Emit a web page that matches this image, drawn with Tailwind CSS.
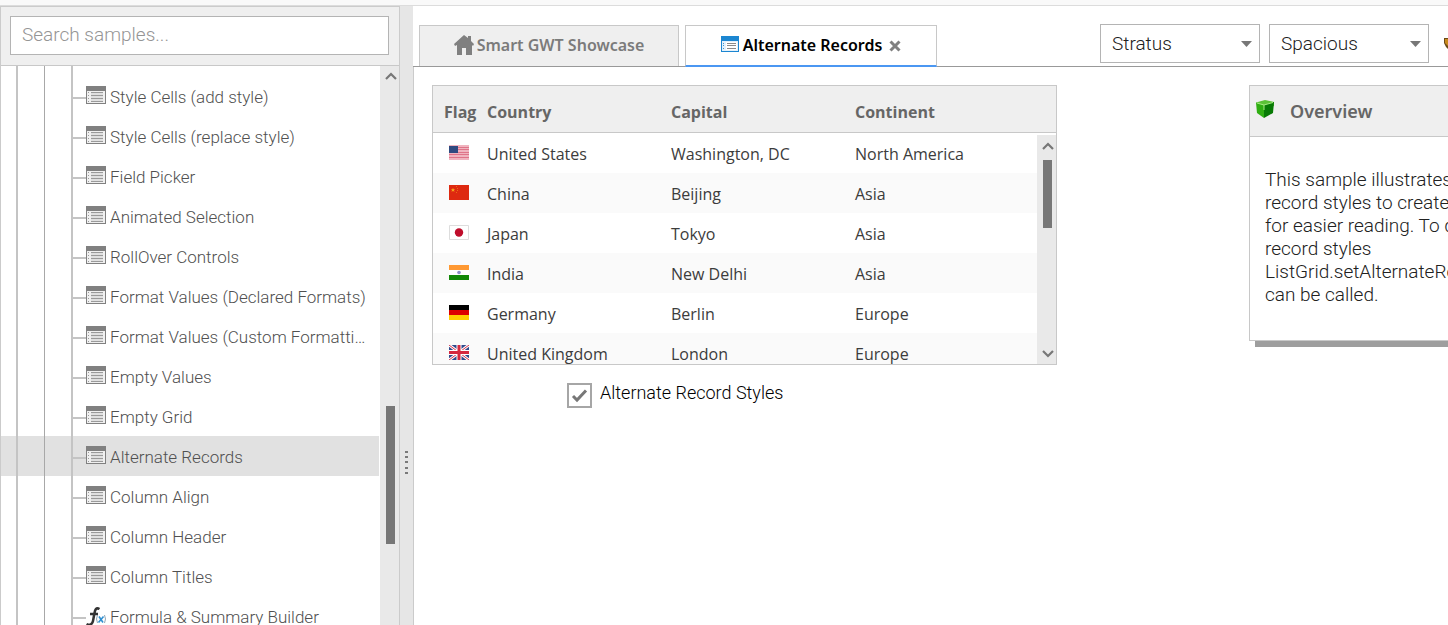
<!DOCTYPE html>
<html lang="en">
<head>
<meta charset="utf-8">
<title>Smart GWT Showcase</title>
<script src="https://cdn.jsdelivr.net/npm/@tailwindcss/browser@4"></script>
</head>
<body class="flex h-screen flex-col overflow-hidden bg-white font-['Roboto',sans-serif] text-lg font-light text-[#212121]">
<svg class="hidden">
  <symbol id="grid" viewBox="0 0 20 18">
    <path fill="#808080" d="M0 0h20v18H0z"/>
    <path fill="#f0f0f0" d="M1 5h18v12H1z"/>
    <path fill="#e0e0e0" d="M5 7h12v8H5z"/>
    <path stroke="#9a9a9a" d="M5 6.500h12M5 9.500h12M5 12.500h12M5 15.500h12M2 6.500h1M2 9.500h1M2 12.500h1M2 15.500h1"/>
  </symbol>
  <symbol id="up" viewBox="0 0 12 8"><path fill="none" stroke="#777" stroke-width="2.200" d="M1 7l5-5 5 5"/></symbol>
</svg>
<div class="h-1.5 shrink-0 border-b border-[#dcdcdc] bg-[#f9f9f9]"></div>
<div class="flex min-h-0 flex-1">
  <aside class="flex w-[400px] shrink-0 flex-col border-x border-t border-[#cbcbcb]">
    <div class="border-b border-[#c8c8c8] bg-[#efefef] pt-[9px] pr-2.5 pb-[10px] pl-[9px]">
      <input type="text" aria-label="Search samples" placeholder="Search samples..." class="block h-[39px] w-full border border-[#b4b4b4] bg-white px-[11px] pb-0.5 text-[19px] font-light placeholder:text-[#959595] outline-none">
    </div>
    <div class="flex min-h-0 flex-1">
      <div class="min-w-0 flex-1 overflow-hidden">
        <ul id="tree" class="-mt-[30px] text-[17px] text-[#505050]"></ul>
      </div>
      <div class="flex w-[19px] shrink-0 flex-col items-center bg-[#e9e9e9] pt-1.5 pl-0.5">
        <svg class="h-2 w-3"><use href="#up"/></svg>
        <div class="mt-[326px] h-[138px] w-[9px] bg-[#777]"></div>
      </div>
    </div>
  </aside>
  <div class="flex w-[13px] shrink-0 items-center justify-center bg-[#e6e6e6] pt-[294px] pr-px">
    <svg class="h-[26px] w-[3px]" viewBox="0 0 3 26" fill="#7a7a7a"><path d="M0 1h3v2H0zM0 6h3v2H0zM0 11h3v2H0zM0 17h3v2H0zM0 22h3v2H0z"/></svg>
  </div>
  <main class="flex min-w-0 flex-1 flex-col overflow-hidden">
    <div class="flex h-[61px] shrink-0 items-end border-b border-[#999] pl-1.5">
      <button class="flex h-[41px] w-[260px] shrink-0 items-center justify-center gap-[3px] border border-b-0 border-[#c8c8c8] bg-[#efefef] pb-0.5 font-['Noto_Sans',sans-serif] text-base font-semibold text-[#7b7b7b]">
        <svg class="h-5 w-5" viewBox="0 0 20 20" fill="#808080"><path d="M10 0L0 9l1 2 2-1v10h5v-7h4v7h6V10l1 1 1-2-3-3V1h-3v2z"/></svg>
        Smart GWT Showcase
      </button>
      <div class="-mb-px ml-1.5 flex h-[42px] w-[252px] shrink-0 items-center justify-center border border-b-2 border-[#c8c8c8] border-b-[#4b97f2] bg-white pb-0.5 font-['Noto_Sans',sans-serif] text-base font-semibold text-black">
        <svg class="mr-1 mb-0.5 h-4 w-[18px]" viewBox="0 0 18 16"><path fill="#1c86d1" d="M0 0h18v16H0z"/><path fill="#e4f1fb" d="M1 5h16v10H1z"/><path fill="#fff" d="M5 6h11v8H5z"/><path stroke="#8a8a8a" d="M6 7.500h9M6 9.500h9M6 12.500h9"/><path stroke="#3c92d4" d="M2 7.500h1M2 9.500h1M2 12.500h1"/></svg>
        <button>Alternate Records</button>
        <button aria-label="Close tab" class="ml-[7px] pt-0.5"><svg class="h-3 w-3" viewBox="0 0 12 12"><path stroke="#808080" stroke-width="3" d="M1.500 1.500l9 9M10.500 1.500l-9 9"/></svg></button>
      </div>
      <div class="mb-[3px] ml-auto flex shrink-0 items-center">
        <label class="relative mr-[9px]"><select aria-label="Skin" class="block h-[39px] w-[160px] appearance-none border border-[#b4b4b4] bg-white pl-[11px] text-[19px] font-light"><option>Stratus</option></select><svg class="pointer-events-none absolute top-[17px] right-2 h-1.5 w-[11px]" viewBox="0 0 11 6"><path fill="#777" d="M0 0h11L5.500 6z"/></svg></label>
        <label class="relative"><select aria-label="Density" class="block h-[39px] w-[160px] appearance-none border border-[#b4b4b4] bg-white pl-[11px] text-[19px] font-light"><option>Spacious</option></select><svg class="pointer-events-none absolute top-[17px] right-2 h-1.5 w-[11px]" viewBox="0 0 11 6"><path fill="#777" d="M0 0h11L5.500 6z"/></svg></label>
        <svg class="ml-[15px] h-3 w-1" viewBox="0 0 4 12"><path fill="#6b4a17" d="M0 0h4v11l-2-2L0 5z"/><path fill="#c98a1c" d="M1 1h3v7L1 5z"/></svg>
      </div>
    </div>
    <div class="flex min-h-0 flex-1 items-start border-l border-[#cbcbcb] pt-[18px] pl-[18px]">
      <section class="w-[625px] shrink-0">
        <div class="flex h-[280px] flex-col border border-[#c8c8c8] font-['Open_Sans',sans-serif] text-base font-normal text-[#3c3c3c]">
          <div class="relative min-h-0 flex-1 overflow-hidden">
            <table class="w-full table-fixed border-separate border-spacing-0">
              <colgroup><col class="w-[52px]"><col class="w-[184px]"><col class="w-[184px]"><col><col class="w-5"></colgroup>
              <thead class="text-left text-[#666]"><tr class="h-[47px] bg-[#efefef] *:border-b *:border-[#c8c8c8] *:pt-1.5 *:font-bold"><th class="pl-[11px]">Flag</th><th class="pl-0.5">Country</th><th class="pl-0.5">Capital</th><th class="pl-0.5">Continent</th><th></th></tr></thead>
              <tbody id="rows" class="[&_td]:pl-0.5 [&_td]:pt-0.5"></tbody>
            </table>
            <div class="absolute top-[49px] right-0 bottom-0 flex w-[19px] flex-col items-center bg-[#e9e9e9] pt-[7px] pb-1.5 pl-0.5">
              <svg class="h-2 w-3"><use href="#up"/></svg>
              <div class="mt-2.5 h-[68px] w-[9px] bg-[#777]"></div>
              <svg class="mt-auto h-2 w-3 rotate-180"><use href="#up"/></svg>
            </div>
          </div>
        </div>
        <label class="mt-3.5 ml-[135px] flex w-max items-center gap-2 text-black">
          <span class="relative block h-[25px] w-[25px]"><input type="checkbox" checked class="peer block h-[25px] w-[25px] appearance-none border-2 border-[#a6a6a6] bg-white"><svg class="pointer-events-none absolute top-1 left-1 hidden h-[17px] w-[17px] peer-checked:block" viewBox="0 0 17 17"><path fill="none" stroke="#777" stroke-width="3" d="M2 9l4 4L15 3.500"/></svg></span>
          <span class="pb-1">Alternate Record Styles</span>
        </label>
      </section>
      <section class="ml-[192px] w-[340px] shrink-0 border border-[#c8c8c8] shadow-[6px_6px_0_#9e9e9e]">
        <h2 class="flex h-[51px] items-center border-b border-[#c8c8c8] bg-[#efefef] pl-1.5 font-['Noto_Sans',sans-serif] text-lg font-semibold text-[#666]">
          <svg class="mr-4 mb-1 h-[18px] w-[18px]" viewBox="0 0 18 18"><path fill="#5bc236" d="M0 2.500L9 0l9 2v4L8 8z"/><path fill="#2fae12" d="M0 2.500L8 5v13L1 13z"/><path fill="#087a05" d="M8 5l10-3-1 11-9 5z"/><path fill="none" stroke="#a6ec83" d="M1 3l7 2 9-2.500M8 5v5"/></svg>
          Overview</h2>
        <p class="pt-[31px] pb-[34px] pl-[15px] text-[19px] leading-[23px] whitespace-nowrap">This sample illustrates the use of alternating<br>record styles to create a ledger effect<br>for easier reading. To disable alternating<br>record styles<br>ListGrid.setAlternateRecordStyles()<br>can be called.</p>
      </section>
    </div>
  </main>
</div>
<script>
const gridIcon = '<svg class="mb-0.5 h-[18px] w-5"><use href="#grid"/></svg>';
const fxIcon = '<svg class="h-[18px] w-5" viewBox="0 0 20 18"><path fill="none" stroke="#333" stroke-width="2.500" d="M13.500 2C10 0 9 3 8.500 6L7 14c-.6 3-3 5-6.500 3M4 7h8"/><path fill="none" stroke="#2f8fd0" stroke-width="1.600" d="M13 9.500l4 6M17.500 9.500l-5 6"/><path fill="none" stroke="#8fa5b5" d="M11.500 8q-2 4 0 8M18.500 8q2 4 0 8"/></svg>';
const names = ['Cell Styles','Style Cells (add style)','Style Cells (replace style)','Field Picker','Animated Selection','RollOver Controls','Format Values (Declared Formats)','Format Values (Custom Formatting)','Empty Values','Empty Grid','Alternate Records','Column Align','Column Header','Column Titles','Formula & Summary Builder'];
document.getElementById('tree').innerHTML = names.map(n => `<li class="flex h-10 items-center pl-[15px] ${n === 'Alternate Records' ? 'bg-[#e1e1e1] mr-px' : ''}">
<span class="flex h-full w-[70px] shrink-0 items-center"><span class="h-full w-7 border-l-2 border-[#c4c4c4]"></span><span class="h-full w-[27px] border-l border-[#a8a8a8]"></span><span class="flex h-full flex-1 items-center border-l-2 border-[#c4c4c4] pt-1"><span class="h-0.5 w-full bg-[#c4c4c4]"></span></span></span>
${n.startsWith('Formula') ? fxIcon : gridIcon}<a href="#" class="ml-1 min-w-0 flex-1 truncate pt-0.5 pr-1.5">${n.replace('&','&amp;')}</a></li>`).join('');
const flags = {
 us:'<path fill="#f0b4bf" d="M0 0h20v15H0z"/><path stroke="#df7489" d="M0 2.500h20M0 4.500h20M0 7.500h20M0 9.500h20M0 12.500h20"/><path fill="#2f4a80" d="M0 1h9v7H0z"/>',
 cn:'<path fill="#de2910" d="M0 0h20v15H0z"/><path fill="#f7a51b" d="M4 3l.7 1.300h1.300L5 5.300l.5 1.500L4 6l-1.500.8.5-1.500-1-1h1.300z"/><path fill="#ea6a14" d="M7 1h1v1H7zM8 3h1v1H8zM8 5h1v1H8zM7 7h1v1H7z"/>',
 jp:'<path fill="#fff" stroke="#ddd" d="M.5.5h19v14H.5z"/><circle cx="10" cy="7.500" r="4.200" fill="#bf0d2b"/>',
 in:'<path fill="#f93" d="M0 0h20v5H0z"/><path fill="#fff" d="M0 5h20v5H0z"/><path fill="#128807" d="M0 10h20v5H0z"/><circle cx="10" cy="7.500" r="1.800" fill="#8c8cc8"/>',
 de:'<path d="M0 0h20v5H0z"/><path fill="#dd0000" d="M0 5h20v5H0z"/><path fill="#ffce00" d="M0 10h20v5H0z"/>',
 gb:'<path fill="#304a8c" d="M0 0h20v15H0z"/><path stroke="#fff" stroke-width="3" d="M0 0l20 15M20 0L0 15"/><path stroke="#d8324a" d="M0 0l20 15M20 0L0 15"/><path stroke="#fff" stroke-width="5" d="M10 0v15M0 7.500h20"/><path stroke="#d5283f" stroke-width="3" d="M10 0v15M0 7.500h20"/>'};
document.getElementById('rows').innerHTML = [['us','United States','Washington, DC','North America'],['cn','China','Beijing','Asia'],['jp','Japan','Tokyo','Asia'],['in','India','New Delhi','Asia'],['de','Germany','Berlin','Europe'],['gb','United Kingdom','London','Europe']].map(r =>
 `<tr class="h-10 even:bg-[#fafafa]"><td><svg class="mb-1 ml-3.5 h-[15px] w-5" viewBox="0 0 20 15">${flags[r[0]]}</svg></td><td>${r[1]}</td><td>${r[2]}</td><td>${r[3]}</td><td></td></tr>`).join('');
</script>
</body>
</html>
